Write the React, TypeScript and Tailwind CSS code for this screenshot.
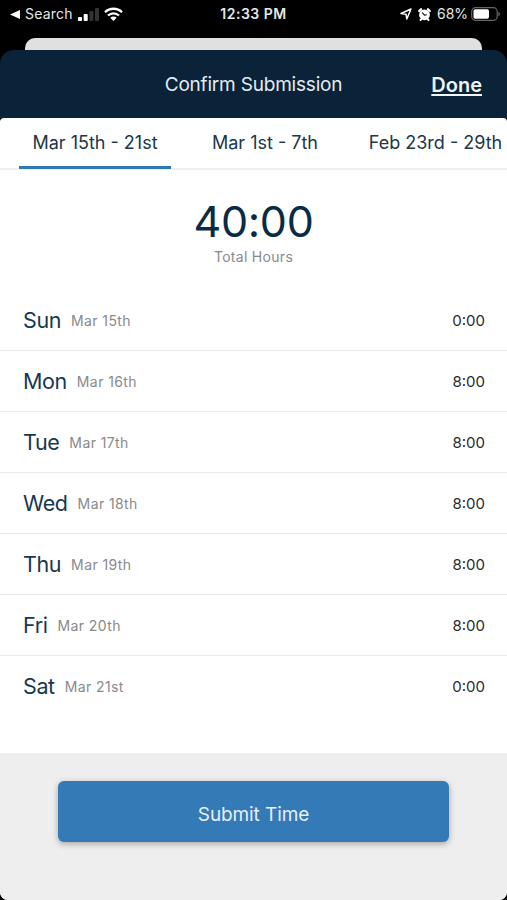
import { useState } from 'react'
import clsx from 'clsx'

const weeks = [
  { label: 'Mar 15th - 21st', width: 'w-[152px]' },
  { label: 'Mar 1st - 7th', width: 'w-[132px]' },
  { label: 'Feb 23rd - 29th', width: 'w-[153px]' },
]

const days = [
  { day: 'Sun', date: 'Mar 15th', hours: '0:00' },
  { day: 'Mon', date: 'Mar 16th', hours: '8:00' },
  { day: 'Tue', date: 'Mar 17th', hours: '8:00' },
  { day: 'Wed', date: 'Mar 18th', hours: '8:00' },
  { day: 'Thu', date: 'Mar 19th', hours: '8:00' },
  { day: 'Fri', date: 'Mar 20th', hours: '8:00' },
  { day: 'Sat', date: 'Mar 21st', hours: '0:00' },
]

function StatusBar() {
  return (
    <div className="grid h-[38px] grid-cols-3 items-start pt-1 text-[14px] leading-5 text-[#e6e6e6]">
      <div className="flex h-5 items-center pl-[10px]">
        <svg className="h-[9px] w-[10px]" viewBox="0 0 10 9" fill="#fff">
          <path d="M0 4.5 10 0v9z" />
        </svg>
        <span className="ml-[5px] w-[48px] whitespace-nowrap tracking-[0.2px]">Search</span>
        <svg className="ml-[5px] h-[13px] w-[21px]" viewBox="0 0 21 13" fill="#fff">
          <rect x="0" y="9" width="4" height="4" rx="0.8" />
          <rect x="5.7" y="6" width="4" height="7" rx="0.8" />
          <rect x="11.4" y="3" width="4" height="10" rx="0.8" fill="#333" />
          <rect x="17" y="0" width="4" height="13" rx="0.8" fill="#333" />
        </svg>
        <svg className="ml-[5px] h-[14px] w-[19px]" viewBox="0 0 19 14" fill="none" stroke="#fff" strokeWidth="2.3">
          <path d="M1 5.2a12.2 12.2 0 0 1 17 0" />
          <path d="M4 8.5a8 8 0 0 1 11 0" />
          <path d="M9.5 14 6.3 10.8a4.6 4.6 0 0 1 6.4 0z" fill="#fff" stroke="none" />
        </svg>
      </div>
      <div className="text-center font-semibold tracking-[0.5px]">12:33 PM</div>
      <div className="flex h-5 items-center justify-end pr-[7px]">
        <svg className="h-3 w-3" viewBox="0 0 12 12" fill="none" stroke="#fff" strokeWidth="1.5" strokeLinejoin="round">
          <path d="M1 5.5 11 1 6.8 11 6 6.2z" />
        </svg>
        <svg className="ml-[6px] h-[13px] w-[13px]" viewBox="0 0 13 13">
          <g stroke="#fff" strokeLinecap="round">
            <path d="M1.3 3 3 1.3M11.7 3 10 1.3" strokeWidth="2.4" />
            <path d="M2.5 12 4 10.5M10.5 12 9 10.5" strokeWidth="1.9" />
          </g>
          <circle cx="6.5" cy="6.8" r="5.4" fill="#fff" />
          <path d="M4.2 4.5 6.5 7.2 8.8 6.7" fill="none" stroke="#000" strokeWidth="1.1" />
        </svg>
        <span className="ml-[6px] w-[31px] whitespace-nowrap">68%</span>
        <svg className="ml-[3px] h-[14px] w-[29px]" viewBox="0 0 29 14">
          <rect x="0.7" y="0.7" width="25.5" height="12.6" rx="3.8" fill="none" stroke="#666" strokeWidth="1.2" />
          <rect x="2.5" y="2.3" width="15.5" height="9.4" rx="1.7" fill="#fff" />
          <path d="M27.4 4.7q1.6.7 1.6 2.3t-1.6 2.3z" fill="#666" />
        </svg>
      </div>
    </div>
  )
}

export default function App() {
  const [active, setActive] = useState(0)

  return (
    <div className="flex h-[900px] w-[507px] flex-col overflow-hidden bg-black font-['Inter',sans-serif]">
      <StatusBar />
      <div className="mx-[25px] h-3 shrink-0 rounded-t-[10px] bg-[#e0e0e0]" />

      <div className="flex min-h-0 flex-1 flex-col overflow-hidden rounded-t-[14px]">
        <header className="grid h-[68px] shrink-0 grid-cols-[1fr_auto_1fr] items-center bg-[#0b2338] pt-[2px] text-white">
          <h1 className="col-start-2 text-[19px] leading-6 tracking-[-0.2px] text-[#e3ebf1]">Confirm Submission</h1>
          <button className="justify-self-end pr-[25px] text-[20px] leading-6 font-semibold text-[#f0f5f9] underline decoration-2 underline-offset-2">
            Done
          </button>
        </header>

        <main className="flex min-h-0 flex-1 flex-col overflow-hidden rounded-t-[4px] rounded-b-[8px] bg-white">
          <nav className="flex h-[52px] shrink-0 gap-[28px] border-b-2 border-[#efefef] pl-[19px]">
            {weeks.map((week, i) => (
              <button
                key={week.label}
                onClick={() => setActive(i)}
                className={clsx(
                  'h-[51px] shrink-0 border-b-[3px] text-[18px] whitespace-nowrap text-[#203748]',
                  week.width,
                  i === active ? 'border-[#3276b5]' : 'border-transparent',
                )}
              >
                {week.label}
              </button>
            ))}
          </nav>

          <section className="flex h-[120px] shrink-0 flex-col items-center pt-[26px]">
            <p className="text-[43px] leading-[50px] tracking-[-0.3px] text-[#0a2b45]">40:00</p>
            <p className="mt-[1px] text-[14px] leading-5 tracking-[0.3px] text-[#8a8a8a]">Total Hours</p>
          </section>

          <ul className="flex-1">
            {days.map((d) => (
              <li
                key={d.day}
                className="flex h-[61px] items-center border-b border-[#e9e9e9] pr-[22px] pl-[23px] last:border-b-0"
              >
                <span className="text-[21.5px] tracking-[-0.4px] text-[#173850]">{d.day}</span>
                <span className="ml-[10px] text-[14px] tracking-[0.4px] text-[#8a8a8a]">{d.date}</span>
                <span className="ml-auto pt-[2px] text-[15px] text-[#2b2b2b]">{d.hours}</span>
              </li>
            ))}
          </ul>

          <footer className="h-[147px] shrink-0 bg-[#eeeeee] px-[58px] pt-[28px]">
            <button className="h-[61px] w-full rounded-[6px] bg-[#337ab7] pt-[7px] text-[19px] tracking-[-0.1px] text-[#e6f0f8] shadow-[0_2px_6px_rgba(0,0,0,0.3)]">
              Submit Time
            </button>
          </footer>
        </main>
      </div>
    </div>
  )
}
